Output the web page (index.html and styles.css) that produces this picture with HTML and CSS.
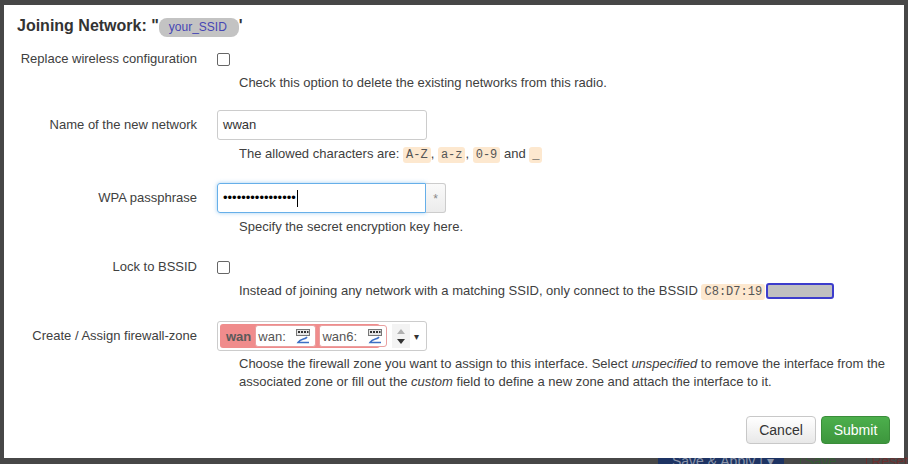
FILE: index.html
```html
<!DOCTYPE html>
<html>
<head>
<meta charset="utf-8">
<link rel="stylesheet" href="styles.css">
</head>
<body>
<div class="page">
  <div class="under-bar">
    <span class="under-apply">Save &amp; Apply <span class="under-sep">|</span> ▾</span>
    <span class="under-save">Save</span>
    <span class="under-reset">Reset</span>
  </div>
</div>
<div class="modal">
  <h4 class="title">Joining Network: "<span class="ssid">your_SSID</span>'</h4>
  <div class="form">
    <div class="row row-check">
      <div class="label">Replace wireless configuration</div>
      <div class="value">
        <div class="check-wrap"><span class="checkbox"></span></div>
        <div class="desc">Check this option to delete the existing networks from this radio.</div>
      </div>
    </div>
    <div class="row row-input r2">
      <div class="label">Name of the new network</div>
      <div class="value">
        <div class="input">wwan</div>
        <div class="desc">The allowed characters are: <code>A-Z</code>, <code>a-z</code>, <code>0-9</code> and <code>_</code></div>
      </div>
    </div>
    <div class="row row-input r3">
      <div class="label">WPA passphrase</div>
      <div class="value">
        <div class="pw-group">
          <div class="input focus"><span class="dots">••••••••••••••••</span><span class="caret"></span></div>
          <div class="reveal">*</div>
        </div>
        <div class="desc">Specify the secret encryption key here.</div>
      </div>
    </div>
    <div class="row row-check r4">
      <div class="label">Lock to BSSID</div>
      <div class="value">
        <div class="check-wrap"><span class="checkbox"></span></div>
        <div class="desc">Instead of joining any network with a matching SSID, only connect to the BSSID <code>C8:D7:19</code><span class="redact"></span></div>
      </div>
    </div>
    <div class="row row-input r5">
      <div class="label">Create / Assign firewall-zone</div>
      <div class="value">
        <div class="zone-select">
          <div class="zone">
            <span class="zone-name">wan</span>
            <span class="zone-net">wan: <svg class="net-icon" width="16" height="15" viewBox="0 0 16 15"><rect x="1.5" y="0.5" width="13" height="6" fill="#e6e6e6" stroke="#777"/><rect x="3" y="2" width="2" height="2" fill="#333"/><rect x="6" y="2" width="2" height="2" fill="#333"/><rect x="9" y="2" width="2" height="2" fill="#333"/><rect x="12" y="2" width="1.5" height="2" fill="#333"/><path d="M12 8 C 10 11, 6 9, 3 13.5 L 14 13.5" fill="none" stroke="#3d6fc4" stroke-width="1.5"/></svg></span>
            <span class="zone-net">wan6: <svg class="net-icon" width="16" height="15" viewBox="0 0 16 15"><rect x="1.5" y="0.5" width="13" height="6" fill="#e6e6e6" stroke="#777"/><rect x="3" y="2" width="2" height="2" fill="#333"/><rect x="6" y="2" width="2" height="2" fill="#333"/><rect x="9" y="2" width="2" height="2" fill="#333"/><rect x="12" y="2" width="1.5" height="2" fill="#333"/><path d="M12 8 C 10 11, 6 9, 3 13.5 L 14 13.5" fill="none" stroke="#3d6fc4" stroke-width="1.5"/></svg></span>
          </div>
          <div class="spinner"><span class="up"></span><span class="down"></span></div>
          <div class="caret-down">▾</div>
        </div>
        <div class="desc wide">Choose the firewall zone you want to assign to this interface. Select <em>unspecified</em> to remove the interface from the associated zone or fill out the <em>custom</em> field to define a new zone and attach the interface to it.</div>
      </div>
    </div>
  </div>
  <div class="footer">
    <button class="btn cancel">Cancel</button>
    <button class="btn submit">Submit</button>
  </div>
</div>
</body>
</html>
```
FILE: styles.css
```css
html, body {
  margin: 0;
  padding: 0;
}
body {
  width: 908px;
  height: 464px;
  background: #474747;
  font-family: "Liberation Sans", Arial, sans-serif;
  overflow: hidden;
  position: relative;
}
.page {
  height: 464px;
  display: flex;
  flex-direction: column;
  justify-content: flex-end;
}
.under-bar {
  display: flex;
  align-items: flex-start;
  height: 7px;
  padding-left: 658px;
  overflow: hidden;
  font-size: 14px;
  line-height: 14px;
}
.under-apply {
  background: #1d3363;
  color: #8a93a8;
  width: 127px;
  height: 20px;
  margin-top: -3px;
  padding-left: 14px;
  box-sizing: border-box;
  white-space: nowrap;
}
.under-sep { color: #8a93a8; }
.under-save {
  color: #355a35;
  margin-left: 16px;
  margin-top: -3px;
  padding-left: 4px;
  border-left: 1px solid #355a35;
}
.under-reset {
  color: #6a3030;
  margin-left: 30px;
  margin-top: -3px;
  padding-left: 4px;
  border-left: 1px solid #6a3030;
}
.modal {
  position: absolute;
  left: 4px;
  top: 5px;
  width: 900px;
  height: 453px;
  background: #fff;
  box-sizing: border-box;
  padding: 0 14px 0 16px;
  color: #404040;
}
.title {
  margin: 11px 0 0 -3px;
  font-size: 16px;
  line-height: 20px;
  font-weight: bold;
  color: #333;
}
.ssid {
  display: inline-block;
  background: #c3c3c3;
  color: #4646b4;
  font-weight: normal;
  font-size: 12px;
  line-height: 19px;
  height: 19px;
  width: 80px;
  padding-left: 10px;
  box-sizing: border-box;
  border-radius: 8px;
  vertical-align: 0;
}
.form {
  display: flex;
  flex-direction: column;
  margin-top: 12px;
}
.row {
  display: flex;
  font-size: 13px;
}
.r2 { margin-top: 18px; }
.r3 { margin-top: 19px; }
.r4 { margin-top: 21px; }
.r5 { margin-top: 20px; }
.label {
  width: 177px;
  text-align: right;
  flex: none;
}
.row-check .label { line-height: 20px; }
.row-input .label { line-height: 30px; }
.value {
  margin-left: 20px;
  display: flex;
  flex-direction: column;
}
.check-wrap {
  height: 20px;
  display: flex;
  align-items: center;
}
.checkbox {
  width: 11px;
  height: 11px;
  border: 1px solid #666;
  border-radius: 2px;
  background: #fff;
}
.desc {
  margin-left: 22px;
  margin-top: 5px;
  line-height: 18px;
  white-space: nowrap;
}
.desc.wide {
  white-space: normal;
  width: 652px;
  margin-top: 4px;
}
code {
  font-family: "Liberation Mono", "Courier New", monospace;
  font-size: 12px;
  background: #fde8cf;
  color: #555;
  padding: 1px 3px;
  border-radius: 3px;
}
.redact {
  display: inline-block;
  width: 68px;
  height: 16px;
  box-sizing: border-box;
  background: #c0c0c0;
  border: 2px solid #3c3ccc;
  border-radius: 3px;
  vertical-align: -4px;
  margin-left: 1px;
}
.input {
  width: 210px;
  height: 30px;
  box-sizing: border-box;
  border: 1px solid #ccc;
  border-radius: 3px;
  padding-left: 5px;
  line-height: 28px;
  color: #333;
  display: flex;
  align-items: center;
}
.pw-group {
  display: flex;
}
.input.focus {
  width: 209px;
  border-color: #66afe9;
  border-radius: 3px 0 0 3px;
  box-shadow: 0 0 4px rgba(102, 175, 233, 0.6);
  color: #000;
}
.dots {
  font-size: 13px;
  letter-spacing: 0;
}
.caret {
  width: 1px;
  height: 17px;
  background: #000;
  margin-left: 1px;
}
.reveal {
  width: 20px;
  height: 30px;
  box-sizing: border-box;
  border: 1px solid #ccc;
  border-left: none;
  border-radius: 0 3px 3px 0;
  background: linear-gradient(#fafafa, #ececec);
  color: #888;
  font-size: 12px;
  text-align: center;
  line-height: 30px;
}
.zone-select {
  width: 210px;
  height: 30px;
  box-sizing: border-box;
  border: 1px solid #ccc;
  border-radius: 3px;
  padding: 2px;
  display: flex;
  align-items: center;
}
.zone {
  height: 24px;
  width: 160px;
  box-sizing: border-box;
  background: #f08c8c;
  border-radius: 3px;
  display: flex;
  align-items: center;
  padding: 1px 1px 1px 6px;
  gap: 3px;
}
.zone-name {
  font-weight: bold;
  color: #5a5a5a;
  font-size: 13px;
  margin-right: 1px;
}
.zone-net {
  height: 22px;
  box-sizing: border-box;
  background: #fff;
  border: 1px solid #e9a0a0;
  border-radius: 3px;
  padding: 0 4px 0 2px;
  display: flex;
  align-items: center;
  color: #555;
  font-size: 13px;
  white-space: pre;
}
.zone-net + .zone-net { padding-right: 3px; }
.net-icon { margin-left: 6px; }
.spinner {
  width: 18px;
  height: 24px;
  margin-left: 12px;
  background: #f3f3f3;
  display: flex;
  flex-direction: column;
  align-items: center;
  justify-content: center;
  gap: 5px;
}
.up {
  width: 0;
  height: 0;
  border-left: 4px solid transparent;
  border-right: 4px solid transparent;
  border-bottom: 5px solid #b0b0b0;
}
.down {
  width: 0;
  height: 0;
  border-left: 4px solid transparent;
  border-right: 4px solid transparent;
  border-top: 5px solid #333;
}
.caret-down {
  margin-left: 4px;
  font-size: 10px;
  color: #333;
}
.footer {
  display: flex;
  justify-content: flex-end;
  gap: 5px;
  margin-top: 25px;
}
.btn {
  height: 28px;
  border-radius: 4px;
  font-family: "Liberation Sans", Arial, sans-serif;
  font-size: 14px;
  padding: 0;
  box-sizing: border-box;
}
.cancel {
  width: 70px;
  border: 1px solid #c8c8c8;
  background: linear-gradient(#ffffff, #e8e8e8);
  color: #333;
}
.submit {
  width: 69px;
  border: 1px solid #3a8d3a;
  background: linear-gradient(#4caf4c, #3d963d);
  color: #fff;
}
```
